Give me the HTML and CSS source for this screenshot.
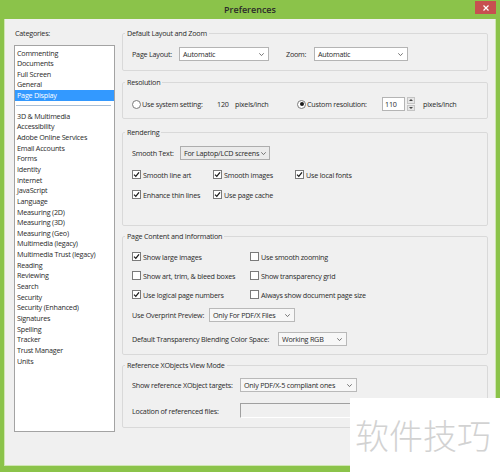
FILE: index.html
```html
<!DOCTYPE html>
<html>
<head>
<meta charset="utf-8">
<title>Preferences</title>
<link rel="stylesheet" href="styles.css">
</head>
<body>
<div class="window">
  <div class="titlebar">
    <span></span>
    <div class="title">Preferences</div>
    <div class="close"><svg width="6" height="6" viewBox="0 0 6 6"><path d="M0.5 0.5 L5.5 5.5 M5.5 0.5 L0.5 5.5" stroke="#fff" stroke-width="1.2"/></svg></div>
  </div>
  <div class="client">
    <div class="sidebar">
      <div class="cat-label">Categories:</div>
      <ul class="catlist">
        <li>Commenting</li>
        <li>Documents</li>
        <li>Full Screen</li>
        <li>General</li>
        <li class="sel">Page Display</li>
        <li class="sep"><div class="sepline"></div></li>
        <li>3D &amp; Multimedia</li>
        <li>Accessibility</li>
        <li>Adobe Online Services</li>
        <li>Email Accounts</li>
        <li>Forms</li>
        <li>Identity</li>
        <li>Internet</li>
        <li>JavaScript</li>
        <li>Language</li>
        <li>Measuring (2D)</li>
        <li>Measuring (3D)</li>
        <li>Measuring (Geo)</li>
        <li>Multimedia (legacy)</li>
        <li>Multimedia Trust (legacy)</li>
        <li>Reading</li>
        <li>Reviewing</li>
        <li>Search</li>
        <li>Security</li>
        <li>Security (Enhanced)</li>
        <li>Signatures</li>
        <li>Spelling</li>
        <li>Tracker</li>
        <li>Trust Manager</li>
        <li>Units</li>
      </ul>
    </div>
    <div class="main">
      <fieldset class="group g1">
        <legend>Default Layout and Zoom</legend>
        <div class="row">
          <span class="lbl w47">Page Layout:</span>
          <div class="select w90"><span>Automatic</span><svg class="chev" width="5" height="3" viewBox="0 0 5 3"><path d="M0.3 0.3 L2.5 2.6 L4.7 0.3" fill="none" stroke="#666" stroke-width="0.9"/></svg></div>
          <span class="lbl gap17 w28">Zoom:</span>
          <div class="select w94"><span>Automatic</span><svg class="chev" width="5" height="3" viewBox="0 0 5 3"><path d="M0.3 0.3 L2.5 2.6 L4.7 0.3" fill="none" stroke="#666" stroke-width="0.9"/></svg></div>
        </div>
      </fieldset>

      <fieldset class="group g2">
        <legend>Resolution</legend>
        <div class="row">
          <span class="rb"></span>
          <span class="lbl w75">Use system setting:</span>
          <span class="lbl w18">120</span>
          <span class="lbl w62">pixels/inch</span>
          <span class="rb on"><span class="dot"></span></span>
          <span class="lbl w75">Custom resolution:</span>
          <div class="spin-input">110</div>
          <div class="spin-btns">
            <div class="sb"><svg width="4" height="2" viewBox="0 0 4 2"><path d="M0 2 L2 0 L4 2 Z" fill="#444"/></svg></div>
            <div class="sb"><svg width="4" height="2" viewBox="0 0 4 2"><path d="M0 0 L2 2 L4 0 Z" fill="#444"/></svg></div>
          </div>
          <span class="lbl unit">pixels/inch</span>
        </div>
      </fieldset>

      <fieldset class="group g3">
        <legend>Rendering</legend>
        <div class="row">
          <span class="lbl w48">Smooth Text:</span>
          <div class="select grey w90"><span>For Laptop/LCD screens</span><svg class="chev" width="5" height="3" viewBox="0 0 5 3"><path d="M0.3 0.3 L2.5 2.6 L4.7 0.3" fill="none" stroke="#666" stroke-width="0.9"/></svg></div>
        </div>
        <div class="crow m9">
          <span class="cbcell w81"><span class="cb"><svg width="7" height="7" viewBox="0 0 7 7"><path d="M1 3.6 L2.8 5.4 L6 1.4" fill="none" stroke="#1a1a1a" stroke-width="1.3"/></svg></span>Smooth line art</span>
          <span class="cbcell w82"><span class="cb"><svg width="7" height="7" viewBox="0 0 7 7"><path d="M1 3.6 L2.8 5.4 L6 1.4" fill="none" stroke="#1a1a1a" stroke-width="1.3"/></svg></span>Smooth images</span>
          <span class="cbcell"><span class="cb"><svg width="7" height="7" viewBox="0 0 7 7"><path d="M1 3.6 L2.8 5.4 L6 1.4" fill="none" stroke="#1a1a1a" stroke-width="1.3"/></svg></span>Use local fonts</span>
        </div>
        <div class="crow m9">
          <span class="cbcell w81"><span class="cb"><svg width="7" height="7" viewBox="0 0 7 7"><path d="M1 3.6 L2.8 5.4 L6 1.4" fill="none" stroke="#1a1a1a" stroke-width="1.3"/></svg></span>Enhance thin lines</span>
          <span class="cbcell"><span class="cb"><svg width="7" height="7" viewBox="0 0 7 7"><path d="M1 3.6 L2.8 5.4 L6 1.4" fill="none" stroke="#1a1a1a" stroke-width="1.3"/></svg></span>Use page cache</span>
        </div>
      </fieldset>

      <fieldset class="group g4">
        <legend>Page Content and Information</legend>
        <div class="crow">
          <span class="cbcell w118"><span class="cb"><svg width="7" height="7" viewBox="0 0 7 7"><path d="M1 3.6 L2.8 5.4 L6 1.4" fill="none" stroke="#1a1a1a" stroke-width="1.3"/></svg></span>Show large images</span>
          <span class="cbcell"><span class="cb"></span>Use smooth zooming</span>
        </div>
        <div class="crow m8">
          <span class="cbcell w118"><span class="cb"></span>Show art, trim, &amp; bleed boxes</span>
          <span class="cbcell"><span class="cb"></span>Show transparency grid</span>
        </div>
        <div class="crow m8">
          <span class="cbcell w118"><span class="cb"><svg width="7" height="7" viewBox="0 0 7 7"><path d="M1 3.6 L2.8 5.4 L6 1.4" fill="none" stroke="#1a1a1a" stroke-width="1.3"/></svg></span>Use logical page numbers</span>
          <span class="cbcell"><span class="cb"></span>Always show document page size</span>
        </div>
        <div class="row m8">
          <span class="lbl w77">Use Overprint Preview:</span>
          <div class="select light w86"><span>Only For PDF/X Files</span><svg class="chev" width="5" height="3" viewBox="0 0 5 3"><path d="M0.3 0.3 L2.5 2.6 L4.7 0.3" fill="none" stroke="#666" stroke-width="0.9"/></svg></div>
        </div>
        <div class="row m10">
          <span class="lbl w146">Default Transparency Blending Color Space:</span>
          <div class="select light w69"><span>Working RGB</span><svg class="chev" width="5" height="3" viewBox="0 0 5 3"><path d="M0.3 0.3 L2.5 2.6 L4.7 0.3" fill="none" stroke="#666" stroke-width="0.9"/></svg></div>
        </div>
      </fieldset>

      <fieldset class="group g5">
        <legend>Reference XObjects View Mode</legend>
        <div class="row">
          <span class="lbl w108">Show reference XObject targets:</span>
          <div class="select light w117"><span>Only PDF/X-5 compliant ones</span><svg class="chev" width="5" height="3" viewBox="0 0 5 3"><path d="M0.3 0.3 L2.5 2.6 L4.7 0.3" fill="none" stroke="#666" stroke-width="0.9"/></svg></div>
        </div>
        <div class="row fieldrow">
          <span class="lbl w108">Location of referenced files:</span>
          <div class="field"></div>
        </div>
      </fieldset>
    </div>
  </div>
  <div class="watermark">软件技巧</div>
</div>
</body>
</html>
```

FILE: styles.css
```css
* { box-sizing: border-box; }
html, body { margin: 0; padding: 0; }
body {
  width: 500px;
  height: 472px;
  overflow: hidden;
  font-family: "Open Sans", "Noto Sans", sans-serif;
  font-size: 7.2px;
  letter-spacing: -0.22px;
  color: #2a2a2a;
}
.window {
  position: relative;
  width: 500px;
  height: 472px;
  background: #8bc34a;
  display: flex;
  flex-direction: column;
  padding: 0 4px 6px 4px;
}
.titlebar {
  height: 19px;
  display: grid;
  grid-template-columns: 1fr auto 1fr;
  align-items: start;
}
.title {
  font-size: 9px;
  font-weight: 600;
  letter-spacing: 0;
  color: #2b2b2b;
  line-height: 19px;
}
.close {
  justify-self: end;
  margin-top: 1px;
  width: 21px;
  height: 13px;
  background: #c75050;
  display: flex;
  align-items: center;
  justify-content: center;
}
.client {
  flex: 1;
  background: #f0f0f0;
  display: flex;
  gap: 7px;
  padding: 9px 9px 0 9px;
  border-left: 1px solid #cfe6b2;
  border-right: 1px solid #cfe6b2;
  border-bottom: 1px solid #cfe6b2;
}
.sidebar { width: 101px; flex: none; }
.cat-label { line-height: 11px; height: 11px; margin-bottom: 6px; padding-left: 1px; }
.catlist {
  list-style: none;
  margin: 0;
  padding: 1.5px 0 0 0;
  height: 387px;
  border: 1px solid #a3a3a3;
  background: #fff;
}
.catlist li {
  line-height: 10.65px;
  height: 10.65px;
  padding-left: 2px;
  white-space: nowrap;
}
.catlist li.sel { background: #3399ff; color: #fff; }
.catlist li.sep {
  height: 10.1px;
  display: flex;
  align-items: center;
  padding: 0 3px 0 1px;
}
.sepline { flex: 1; height: 1px; background: #a9bfd6; }

.main { width: 366px; flex: none; display: flex; flex-direction: column; }
.group {
  margin: 0;
  border: 1px solid #d9d9d9;
  border-radius: 2px;
  padding: 0 9px;
  min-width: 0;
}
.group legend {
  padding: 0 2px;
  margin-left: -7px;
  line-height: 11px;
  font-size: 7.2px;
}
.g1 { height: 43px; padding-top: 8px; }
.g2 { height: 42px; padding-top: 9px; margin-top: 6px; }
.g3 { height: 99px; padding-top: 8px; margin-top: 8px; }
.g4 { height: 124px; padding-top: 9px; margin-top: 5px; }
.g5 { height: 68px; padding-top: 7px; margin-top: 5px; }

.row { display: flex; align-items: center; height: 14px; }
.crow { display: flex; align-items: center; height: 11px; }
.m8 { margin-top: 8px; }
.m9 { margin-top: 9px; }
.m10 { margin-top: 10px; }
.fieldrow { height: 15px; margin-top: 11px; }

.lbl { white-space: nowrap; flex: none; }
.w18 { width: 18px; }
.w28 { width: 28px; }
.w47 { width: 47px; }
.w48 { width: 48px; }
.w62 { width: 62px; }
.w69 { width: 69px; }
.w75 { width: 75px; }
.w77 { width: 77px; }
.w81 { width: 81px; }
.w82 { width: 82px; }
.w86 { width: 86px; }
.w90 { width: 90px; }
.w94 { width: 94px; }
.w108 { width: 108px; }
.w117 { width: 117px; }
.w118 { width: 118px; }
.w146 { width: 146px; }
.gap17 { margin-left: 17px; }

.select {
  flex: none;
  height: 14px;
  border: 1px solid #b4b4b4;
  background: #fff;
  display: flex;
  align-items: center;
  justify-content: space-between;
  gap: 2px;
  padding: 0 4px 0 3px;
  white-space: nowrap;
}
.select.grey { background: #ebebeb; border-color: #adadad; }
.select.light { background: #f7f7f7; border-color: #b9b9b9; }
.chev { flex: none; }

.rb {
  flex: none;
  width: 9px;
  height: 9px;
  border: 1px solid #7a7a7a;
  border-radius: 50%;
  background: #fff;
  margin-right: 1px;
  display: flex;
  align-items: center;
  justify-content: center;
}
.rb .dot { width: 4px; height: 4px; border-radius: 50%; background: #1a1a1a; }

.spin-input {
  flex: none;
  width: 23px;
  height: 14px;
  border: 1px solid #b4b4b4;
  background: #fff;
  padding-left: 2px;
  line-height: 12px;
}
.spin-btns {
  flex: none;
  width: 8px;
  height: 14px;
  margin-left: 2px;
  display: flex;
  flex-direction: column;
  gap: 1px;
}
.sb {
  flex: 1;
  background: #e6e6e6;
  border: 1px solid #c4c4c4;
  display: flex;
  align-items: center;
  justify-content: center;
}
.unit { margin-left: 8px; }

.cbcell { display: flex; align-items: center; white-space: nowrap; flex: none; }
.cb {
  flex: none;
  width: 9px;
  height: 9px;
  border: 1px solid #7a7a7a;
  background: #fff;
  margin-right: 2px;
  display: flex;
  align-items: center;
  justify-content: center;
}

.field {
  flex: none;
  width: 241px;
  height: 15px;
  border-top: 1px solid #a0a0a0;
  border-left: 1px solid #a0a0a0;
  border-right: 1px solid #fff;
  border-bottom: 1px solid #fff;
  background: #f0f0f0;
}

.watermark {
  position: absolute;
  left: 350px;
  top: 398px;
  width: 150px;
  height: 74px;
  background: #fff;
  padding: 17px 0 0 5px;
  font-family: "Noto Sans CJK SC", sans-serif;
  font-weight: 300;
  font-size: 34px;
  letter-spacing: 0;
  line-height: 40px;
  color: #d2d2d2;
  white-space: nowrap;
}
```
